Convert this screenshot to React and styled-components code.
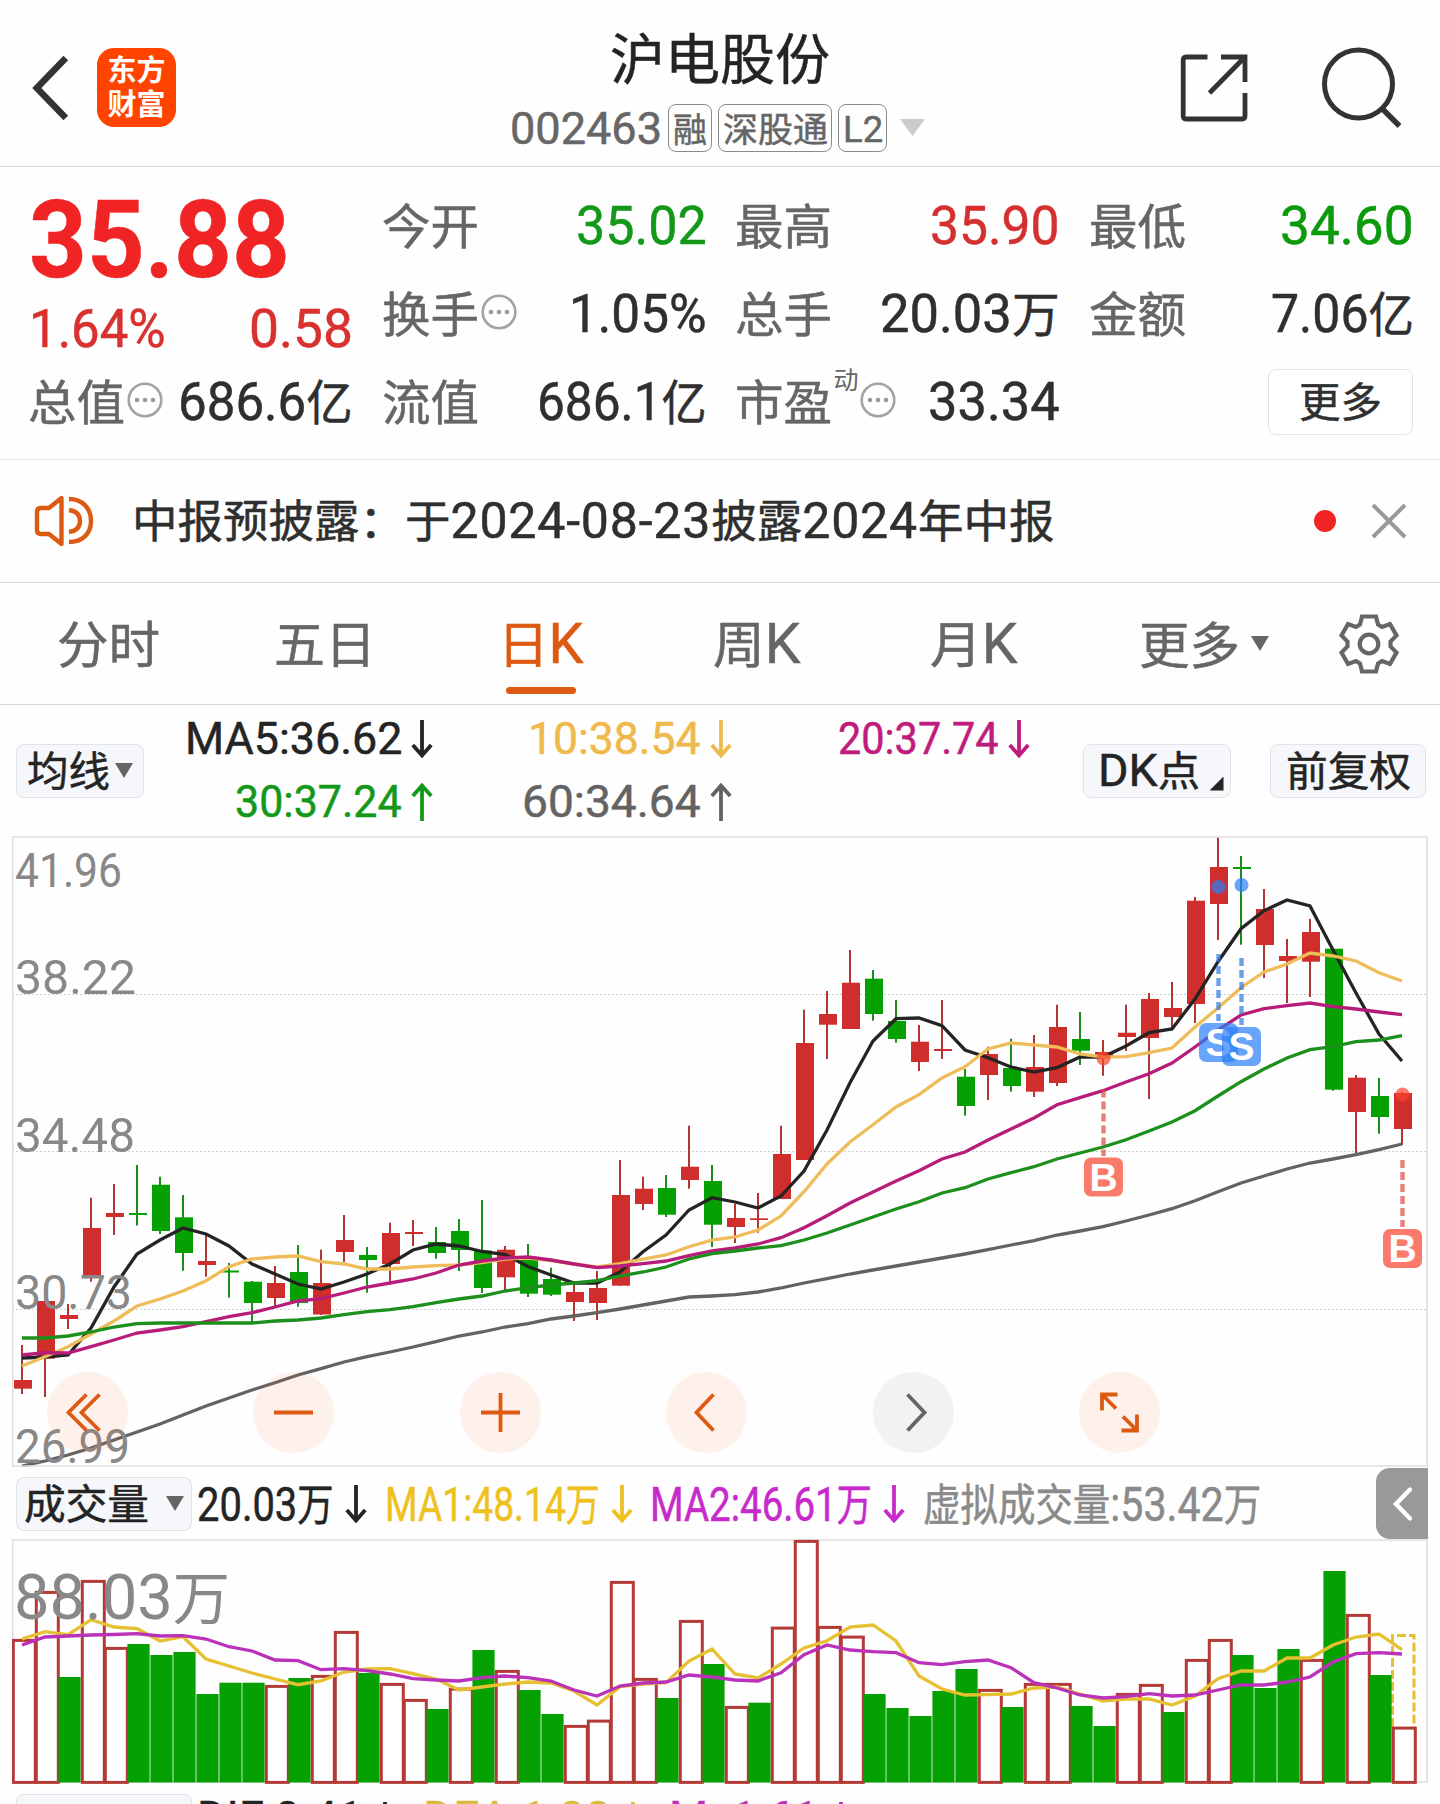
import React, { useLayoutEffect, useRef, useState } from 'react';
import styled, { createGlobalStyle } from 'styled-components';

const RED = '#cf2e2c';
const GREEN = '#05a002';
const ORANGE = '#dd5a12';

// [direction, high, low, bodyTop, bodyBottom]
const candles = [
  ['r', 1345, 1394, 1380, 1388.7], ['r', 1295, 1397, 1301, 1358.7], ['r', 1304, 1329, 1315, 1319],
  ['r', 1197.7, 1281.7, 1228, 1277], ['r', 1184, 1235, 1213, 1217], ['g', 1165, 1225.5, 1213, 1215],
  ['g', 1176.7, 1234, 1184.7, 1231], ['g', 1195, 1270.7, 1217.3, 1253], ['r', 1233, 1276.7, 1261, 1265],
  ['g', 1263, 1297.7, 1270.5, 1272.5], ['g', 1281, 1323, 1281.7, 1303], ['r', 1266, 1306, 1283, 1298],
  ['g', 1245, 1306.7, 1272, 1303], ['r', 1249.7, 1315, 1283, 1314.5], ['r', 1215, 1262, 1240, 1252],
  ['g', 1247, 1292.7, 1255, 1260], ['r', 1222.7, 1282, 1233, 1264], ['r', 1220, 1246, 1232, 1234],
  ['g', 1227, 1258.7, 1242, 1253], ['g', 1219, 1271, 1231, 1250], ['g', 1200, 1293, 1250.5, 1288],
  ['r', 1246, 1290, 1249.7, 1277.3], ['g', 1244, 1297, 1260, 1293.7], ['g', 1267.7, 1296, 1279, 1294.7],
  ['r', 1283, 1321, 1292, 1302], ['r', 1271, 1320, 1288, 1303], ['r', 1160, 1285.7, 1195, 1285.7],
  ['r', 1176.7, 1210, 1188.7, 1204], ['g', 1175, 1217, 1188, 1214.7], ['r', 1125.7, 1188.7, 1166.7, 1180],
  ['g', 1165, 1247, 1181, 1224.7], ['r', 1204, 1243, 1218, 1227], ['r', 1193, 1232.7, 1218.3, 1220],
  ['r', 1125.7, 1199, 1154, 1199], ['r', 1009.7, 1160, 1043, 1160], ['r', 991, 1059, 1014, 1024.7],
  ['r', 950, 1029, 982.7, 1029], ['g', 970, 1020.7, 978.7, 1014], ['g', 1000, 1042.7, 1021, 1039],
  ['r', 1025, 1071, 1041.7, 1062], ['r', 1000, 1059, 1049, 1051], ['g', 1069, 1115.7, 1076.7, 1106],
  ['r', 1046.7, 1100, 1054, 1075], ['g', 1038.7, 1091.7, 1068, 1086], ['r', 1035, 1097, 1067, 1091.7],
  ['r', 1004.7, 1086, 1027, 1083], ['g', 1012, 1065, 1039, 1050.7], ['r', 1040, 1075.7, 1052, 1057],
  ['r', 1004.7, 1051, 1032.7, 1037], ['r', 993, 1099, 999, 1038], ['r', 982, 1028, 1008, 1017],
  ['r', 897, 1023, 900.7, 1004], ['r', 837, 940, 867, 904], ['g', 856, 944.7, 867, 869],
  ['r', 889, 978, 909, 945], ['r', 939, 1003, 956, 961], ['r', 919, 997, 932, 961.7],
  ['g', 948, 1090.7, 948.7, 1089.7], ['r', 1075, 1153, 1077.7, 1112], ['g', 1078, 1133.7, 1096, 1117],
  ['r', 1092, 1145, 1093, 1129],
];

const priceLines = [
  {
    color: '#636363',
    points: [1466, 1461, 1455, 1448, 1440, 1432, 1424, 1415, 1406, 1398, 1390, 1382.7, 1375, 1368.7, 1362, 1356.7, 1352, 1347, 1341.7, 1336,
      1332, 1327, 1323.7, 1319, 1316, 1312.7, 1309, 1305, 1301, 1297, 1296, 1294.7, 1292, 1288, 1283, 1278.7, 1274, 1270, 1266, 1262,
      1258, 1254, 1249.7, 1245, 1240.7, 1235, 1231, 1226.7, 1221, 1215, 1208.7, 1200.7, 1191.7, 1183, 1176, 1169, 1163, 1159, 1154.7, 1149.7, 1144],
  },
  {
    color: '#242424',
    points: [1358, 1357, 1355, 1328, 1287, 1254, 1240, 1228, 1234, 1246, 1264, 1274, 1284, 1289, 1282, 1274, 1264, 1250, 1244, 1246,
      1251.5, 1254.5, 1266.5, 1275, 1283, 1283, 1272, 1251.7, 1235, 1210, 1197.7, 1202, 1208, 1196, 1171, 1130, 1082.7, 1041, 1018.7, 1018,
      1025.7, 1050, 1057.7, 1067, 1072, 1067.7, 1057, 1057, 1046, 1032.7, 1029, 999, 961.7, 928.7, 910.7, 900, 906, 950, 993, 1034, 1061],
  },
  {
    color: '#eebc58',
    points: [1366, 1356.7, 1346.7, 1334, 1321, 1306, 1299, 1291, 1280.7, 1266.7, 1259, 1257, 1256, 1261.7, 1264, 1269, 1269, 1267, 1265.7, 1265,
      1262.5, 1259, 1258, 1260.5, 1264, 1267, 1263.7, 1259, 1255, 1246.7, 1240, 1237, 1230, 1216, 1191.7, 1164, 1142, 1124.7, 1107, 1094.7,
      1078, 1066.7, 1049, 1043, 1045, 1047, 1054, 1057, 1056.7, 1052.7, 1048, 1027, 1008, 987.7, 972, 964, 953, 956, 961, 972.7, 981],
  },
  {
    color: '#b81c7a',
    points: [1355, 1352.7, 1353, 1346.7, 1340, 1333, 1330, 1326.7, 1321.7, 1316.7, 1312.7, 1307, 1301, 1298.7, 1293, 1287, 1283, 1279, 1273, 1265,
      1261, 1258, 1257, 1260, 1264, 1267.7, 1266, 1263.7, 1261, 1255.7, 1251, 1248, 1244, 1237.7, 1227.7, 1215.7, 1203, 1192, 1181, 1170.7,
      1159, 1152, 1140, 1129, 1118, 1104.7, 1097.7, 1090.7, 1082, 1073.7, 1063, 1047, 1030, 1015, 1008.7, 1005.7, 1003, 1006.7, 1009, 1012, 1014.7],
  },
  {
    color: '#1c8f1c',
    points: [1338, 1338, 1336, 1332, 1327, 1323.7, 1323, 1323, 1323, 1323, 1323, 1321, 1320, 1318, 1314.7, 1311.7, 1309.7, 1306.7, 1302.7, 1299,
      1296, 1291, 1287.7, 1285, 1283, 1280.7, 1276, 1272, 1267, 1259, 1253.7, 1251, 1248, 1245.7, 1240, 1233, 1225, 1217, 1209, 1201.7,
      1193, 1187.7, 1179, 1172.7, 1166.7, 1159, 1153, 1147, 1139.7, 1131, 1122, 1110.7, 1096, 1081.7, 1069, 1058, 1049.7, 1046.7, 1041.7, 1040, 1035.7],
  },
];

// [direction, top]
const volumes = [
  ['r', 1639], ['r', 1591], ['g', 1677], ['r', 1580], ['r', 1647], ['g', 1644], ['g', 1655], ['g', 1652], ['g', 1694], ['g', 1682.7],
  ['g', 1682.7], ['r', 1685], ['g', 1678], ['r', 1675], ['r', 1631], ['g', 1673], ['r', 1683], ['r', 1699], ['g', 1709], ['r', 1687.7],
  ['g', 1650], ['r', 1670], ['g', 1690], ['g', 1714], ['r', 1725], ['r', 1719.7], ['r', 1581], ['r', 1678], ['g', 1698], ['r', 1620],
  ['g', 1664], ['r', 1706], ['g', 1702.7], ['r', 1626.7], ['r', 1540], ['r', 1626], ['r', 1635.7], ['g', 1694], ['g', 1708], ['g', 1716],
  ['g', 1691], ['g', 1669], ['r', 1689], ['g', 1707], ['r', 1683], ['r', 1683], ['g', 1706], ['g', 1726], ['r', 1693], ['r', 1684],
  ['g', 1712], ['r', 1659], ['r', 1639], ['g', 1655], ['g', 1688], ['g', 1649], ['r', 1659], ['g', 1571], ['r', 1614], ['g', 1675],
  ['r', 1726.7],
];

const volumeLines = [
  {
    color: '#e6c030',
    points: [1639, 1631.7, 1634.7, 1619.7, 1627, 1628.7, 1641, 1636.7, 1659, 1666, 1673, 1679, 1684.7, 1681, 1672, 1669, 1668.7, 1673.7, 1679, 1690,
      1687, 1684, 1682, 1683, 1691, 1705, 1686.7, 1684, 1682.7, 1661, 1649, 1674, 1678, 1664, 1648, 1640.7, 1627, 1625, 1641, 1676,
      1689, 1695, 1694.7, 1694, 1688, 1687, 1694, 1701, 1699, 1699, 1705, 1696, 1678.7, 1671, 1671, 1658, 1658, 1645, 1637, 1634, 1649.7],
  },
  {
    color: '#b932b9',
    points: [1645, 1637, 1636, 1635, 1634.5, 1633.7, 1636, 1635.7, 1639, 1646.7, 1651, 1660, 1660.7, 1669.7, 1668.7, 1670.7, 1674, 1678.7, 1680, 1681,
      1677.7, 1676, 1677.7, 1681, 1690, 1696, 1686, 1683, 1682, 1675, 1677, 1680, 1681, 1672.7, 1654.7, 1645, 1650, 1651.7, 1652.7, 1662.7,
      1664.7, 1661.7, 1660, 1667.7, 1682.7, 1688, 1695, 1698, 1696.7, 1693.7, 1696, 1695, 1690, 1685, 1685, 1682, 1677, 1662, 1653.7, 1652.7, 1654],
  },
];

const priceLabels = [
  ['41.96', 887, 103], ['38.22', 994, 117], ['34.48', 1152, 116], ['30.73', 1309, 113], ['26.99', 1463, 111],
];

// trade marks: index of the candle, dot y, dash start/end, badge left/top
const marks = [
  { type: 'S', i: 52, dot: 887, from: 954, to: 1021, x: 1199, y: 1023 },
  { type: 'S', i: 53, dot: 885, from: 958, to: 1025, x: 1222, y: 1027 },
  { type: 'B', i: 47, dot: 1058.5, from: 1089.5, to: 1156, x: 1084, y: 1157.5 },
  { type: 'B', i: 60, dot: 1094.5, from: 1160, to: 1227, x: 1383, y: 1229 },
];

const cx = (i) => 22 + i * 23;
const toPoints = (ys) => ys.map((y, i) => `${cx(i)},${y}`).join(' ');

// Latin glyphs are set a bit larger than the Chinese ones next to them
const Mixed = ({ children }) =>
  children.split(/([\x20-\x7e]+)/).filter(Boolean).map((part, i) =>
    /[\x20-\x7e]/.test(part) ? <Latin key={i}>{part}</Latin> : part
  );

// Squeezes or stretches one line of text to a fixed width
const Fit = ({ width, children }) => {
  const ref = useRef(null);
  const [scale, setScale] = useState(1);

  useLayoutEffect(() => {
    setScale(width / ref.current.offsetWidth);
  }, [width, children]);

  return (
    <FitBox $width={width}>
      <FitText ref={ref} style={{ transform: `translateY(0.05em) scaleX(${scale})` }}>
        <Mixed>{children}</Mixed>
      </FitText>
    </FitBox>
  );
};

const DotsIcon = () => (
  <Dots viewBox="0 0 36 36">
    <circle cx="18" cy="18" r="16.3" fill="none" stroke="#a3a3a3" strokeWidth="2.6" />
    <circle cx="10" cy="18" r="2.3" fill="#999" />
    <circle cx="18" cy="18" r="2.3" fill="#999" />
    <circle cx="26" cy="18" r="2.3" fill="#999" />
  </Dots>
);

const Arrow = ({ up }) => (
  <ArrowSvg viewBox="0 0 22 38" $up={up}>
    <path d="M11 0V36M1.8 25L11 35.5L20.2 25" fill="none" stroke="currentColor" strokeWidth="3.8" />
  </ArrowSvg>
);

const Stat = ({ label, width, labelWidth = 97, sup, dots, value, color }) => (
  <StatCell>
    <StatLabel>
      <Fit width={labelWidth}>{label}</Fit>
      {sup && <Sup>{sup}</Sup>}
      {dots && <DotsIcon />}
    </StatLabel>
    <StatValue $color={color}>
      <Fit width={width}>{value}</Fit>
    </StatValue>
  </StatCell>
);

const Average = ({ text, width, color, up }) => (
  <AverageItem $color={color}>
    <Fit width={width}>{text}</Fit>
    <Arrow up={up} />
  </AverageItem>
);

const controls = [
  { name: 'first', path: 'M26 -18L8 0L26 18M13 -18L-5 0L13 18', shift: -14 },
  { name: 'zoom-out', path: 'M-19.5 0H19.5' },
  { name: 'zoom-in', path: 'M-19.5 0H19.5M0 -19.5V19.5' },
  { name: 'prev', path: 'M7 -18L-10 0L7 18' },
  { name: 'next', path: 'M-6 -18L11 0L-6 18', muted: true },
  { name: 'full', path: 'M-17.5 -2V-18H-2M-17 -17.5L-3.5 -4M17.5 2V18H2M17 17.5L3.5 4' },
];

const PriceChart = () => (
  <ChartSvg viewBox="12 836 1416 631" $height={631}>
    {[994.5, 1151.5, 1309.5].map((y) => (
      <line key={y} x1="12" x2="1427" y1={y} y2={y} stroke="#cfcfcf" strokeWidth="1" strokeDasharray="2 2" />
    ))}
    {candles.map(([dir, high, low, top, bottom], i) => {
      const color = dir === 'r' ? RED : GREEN;
      return (
        <g key={i}>
          <rect x={cx(i) - 1} y={high} width="2" height={low - high} fill={dir === 'r' ? '#b23532' : '#1b8d1b'} />
          <rect x={cx(i) - 8} y={top} width="18" height={bottom - top} fill={color} />
        </g>
      );
    })}
    {priceLines.map((line) => (
      <polyline key={line.color} points={toPoints(line.points)} fill="none" stroke={line.color} strokeWidth="3.3" />
    ))}
    {marks.map((m) => {
      const color = m.type === 'S' ? '#2a7ef8' : '#f9452f';
      return (
        <g key={m.i}>
          <g opacity="0.7" fill={color}>
            <circle cx={cx(m.i) + 0.5} cy={m.dot} r="7" />
            <line x1={cx(m.i) + 0.5} x2={cx(m.i) + 0.5} y1={m.from} y2={m.to} stroke={m.type === 'S' ? '#2e7be0' : '#d8503f'} strokeWidth="4.4" strokeDasharray="8 4" />
            <rect x={m.x} y={m.y} width="39" height="39" rx="7" />
          </g>
          <MarkText x={m.x + 19.5} y={m.y + 33}>{m.type}</MarkText>
        </g>
      );
    })}
    {priceLabels.map(([text, y, width]) => (
      <AxisText key={text} x="15" y={y} textLength={width + 4} lengthAdjust="spacingAndGlyphs">{text}</AxisText>
    ))}
    <path d="M12.7 1466V837H1427V1466Z" fill="none" stroke="#dedede" strokeWidth="1.6" />
  </ChartSvg>
);

const VolumeChart = () => (
  <ChartSvg viewBox="12 1539 1416 245" $height={245}>
    <path d="M12.7 1782V1540H1427V1782Z" fill="none" stroke="#dedede" strokeWidth="1.6" />
    <path d="M1392.5 1727V1635.5H1414V1727" fill="none" stroke="#e6c030" strokeWidth="3" strokeDasharray="9 3" />
    {volumes.map(([dir, top], i) =>
      dir === 'r' ? (
        <rect key={i} x={cx(i) - 8.7} y={top + 1.4} width="22" height={1781 - top} fill="#fff" stroke="#b43a37" strokeWidth="3" />
      ) : (
        <rect key={i} x={cx(i) - 9.6} y={top} width="22.2" height={1782.5 - top} fill={GREEN} />
      )
    )}
    {volumeLines.map((line) => (
      <polyline key={line.color} points={toPoints(line.points)} fill="none" stroke={line.color} strokeWidth="3.3" />
    ))}
    <VolumeText x="14" y="1619" textLength="216" lengthAdjust="spacingAndGlyphs">
      88.03<tspan fontSize="57">万</tspan>
    </VolumeText>
  </ChartSvg>
);

export default function App() {
  return (
    <Page>
      <GlobalStyle />
      <Header>
        <HeaderLeft>
          <svg width="40" height="66" viewBox="0 0 40 66">
            <path d="M36.8 3L7.8 33L36.8 63" fill="none" stroke="#333" strokeWidth="6.6" />
          </svg>
          <Logo>
            <span>东方</span>
            <span>财富</span>
          </Logo>
        </HeaderLeft>
        <HeaderCenter>
          <Title><Fit width={220}>沪电股份</Fit></Title>
          <CodeRow>
            <Code><Fit width={152}>002463</Fit></Code>
            <Tag $width={44}><Fit width={34}>融</Fit></Tag>
            <Tag $width={114}><Fit width={105}>深股通</Fit></Tag>
            <Tag $width={49}><Fit width={40}>L2</Fit></Tag>
            <Triangle $size={25} $height={17} $color="#cbcbcb" $left={7} />
          </CodeRow>
        </HeaderCenter>
        <HeaderRight>
          <svg width="68" height="68" viewBox="0 0 68 68">
            <path d="M27.5 3H6Q3.2 3 3.2 6V62Q3.2 65 6 65H62Q65 65 65 62V39M65 28V3H41M65 3L29.5 39" fill="none" stroke="#333" strokeWidth="4.8" />
          </svg>
          <svg width="84" height="84" viewBox="0 0 84 84">
            <circle cx="38.5" cy="38" r="34" fill="none" stroke="#333" strokeWidth="5" />
            <path d="M61.5 62L79.5 80" fill="none" stroke="#333" strokeWidth="5.4" />
          </svg>
        </HeaderRight>
      </Header>

      <Quote>
        <PriceBlock>
          <Price><Fit width={261}>35.88</Fit></Price>
          <Change>
            <Fit width={137}>1.64%</Fit>
            <Fit width={104}>0.58</Fit>
          </Change>
        </PriceBlock>
        <Stat label="今开" value="35.02" width={131} color="#14981a" />
        <Stat label="最高" value="35.90" width={130} color="#d53030" />
        <Stat label="最低" value="34.60" width={134} color="#0c9a0c" />
        <Stat label="换手" dots value="1.05%" width={138} />
        <Stat label="总手" value="20.03万" width={180} />
        <Stat label="金额" value="7.06亿" width={143} />
        <Stat label="总值" dots value="686.6亿" width={175} />
        <Stat label="流值" value="686.1亿" width={170} />
        <Stat label="市盈" sup="动" dots value="33.34" width={132} />
        <MoreCell>
          <MoreButton><Fit width={83}>更多</Fit></MoreButton>
        </MoreCell>
      </Quote>

      <Notice>
        <svg width="62" height="54" viewBox="0 0 62 54">
          <g fill="none" stroke={ORANGE} strokeWidth="4.4">
            <path d="M28.5 4V50L16 40H8Q4 40 4 36V18Q4 14 8 14H16Z" strokeLinejoin="round" />
            <path d="M36 5C49 5 58 14 58 27C58 40 49 48 36 48" />
            <path d="M36 16C43 17 47 21 47 27C47 33 43 37 36 38" />
          </g>
        </svg>
        <NoticeText><Fit width={922}>中报预披露：于2024-08-23披露2024年中报</Fit></NoticeText>
        <RedDot />
        <svg width="36" height="36" viewBox="0 0 36 36">
          <path d="M2 2L34 34M34 2L2 34" stroke="#999" strokeWidth="4" />
        </svg>
      </Notice>

      <Tabs>
        <Tab><Fit width={103}>分时</Fit></Tab>
        <Tab><Fit width={102}>五日</Fit></Tab>
        <Tab $active><Fit width={86}>日K</Fit></Tab>
        <Tab><Fit width={88}>周K</Fit></Tab>
        <Tab><Fit width={88}>月K</Fit></Tab>
        <MoreTab>
          <Fit width={101}>更多</Fit>
          <Triangle $size={18} $height={15} $color="#666" $left={11} />
        </MoreTab>
        <GearTab>
          <svg width="64" height="64" viewBox="-32 -32 64 64">
            <path
              d="M-7 -27.5H7L9 -19.5L13 -17L21 -20L27.5 -8.5L21.5 -2.5V2.5L27.5 8.5L21 20L13 17L9 19.5L7 27.5H-7L-9 19.5L-13 17L-21 20L-27.5 8.5L-21.5 2.5V-2.5L-27.5 -8.5L-21 -20L-13 -17L-9 -19.5Z"
              fill="none" stroke="#666" strokeWidth="4.2"
            />
            <circle r="9.3" fill="none" stroke="#666" strokeWidth="4.2" />
          </svg>
        </GearTab>
      </Tabs>

      <AverageBar>
        <Chip $width={128}>
          <Fit width={83}>均线</Fit>
          <Triangle $size={18} $height={15} $color="#666" $left={5} />
        </Chip>
        <Averages>
          <Average text="MA5:36.62" width={217} color="#242424" />
          <Average text="10:38.54" width={173} color="#f0b94c" />
          <Average text="20:37.74" width={161} color="#c01c7e" />
          <Average text="30:37.24" width={167} color="#14981a" up />
          <Average text="60:34.64" width={179} color="#636363" up />
        </Averages>
        <Chip $width={148} $start>
          <Fit width={102}>DK点</Fit>
          <Corner />
        </Chip>
        <Chip $width={156}><Fit width={125}>前复权</Fit></Chip>
      </AverageBar>

      <ChartArea>
        <PriceChart />
        <Controls>
          {controls.map((c) => (
            <Control key={c.name} $muted={c.muted}>
              <svg width="81" height="81" viewBox="-40.5 -40.5 81 81">
                <path d={c.path} transform={`translate(${c.shift || 0} 0)`} fill="none" stroke="currentColor" strokeWidth="3.8" />
              </svg>
            </Control>
          ))}
        </Controls>
      </ChartArea>

      <VolumeBar>
        <Chip $width={176}>
          <Fit width={125}>成交量</Fit>
          <Triangle $size={18} $height={15} $color="#666" $left={17} />
        </Chip>
        <Readout $color="#242424" $width={188}>
          <Fit width={137}>20.03万</Fit>
          <Arrow />
        </Readout>
        <Readout $color="#efc11f" $width={265}>
          <Fit width={215}>MA1:48.14万</Fit>
          <Arrow />
        </Readout>
        <Readout $color="#c72acb" $width={273}>
          <Fit width={222}>MA2:46.61万</Fit>
          <Arrow />
        </Readout>
        <Readout $color="#8a8a8a" $width={340}>
          <Fit width={338}>虚拟成交量:53.42万</Fit>
        </Readout>
        <DrawerHandle>
          <svg width="24" height="36" viewBox="0 0 24 36">
            <path d="M20 3.5L6 18L20 32.5" fill="none" stroke="#fff" strokeWidth="4.4" strokeLinecap="round" />
          </svg>
        </DrawerHandle>
      </VolumeBar>

      <ChartArea>
        <VolumeChart />
      </ChartArea>

      <MacdBar>
        <Chip $width={176}>MACD</Chip>
        <Readout $color="#242424" $width={226}>
          <Fit width={166}>DIF:0.41</Fit>
          <Arrow />
        </Readout>
        <Readout $color="#d9bb3c" $width={246}>
          <Fit width={188}>DEA:1.28</Fit>
          <Arrow />
        </Readout>
        <Readout $color="#b932b9" $width={190}>
          <Fit width={150}>M:-1.61</Fit>
          <Arrow />
        </Readout>
      </MacdBar>
    </Page>
  );
}

const GlobalStyle = createGlobalStyle`
  * {
    box-sizing: border-box;
  }

  body {
    margin: 0;
    background: #fff;
  }

  svg {
    display: block;
    flex: none;
  }
`;

const Page = styled.div`
  width: 1440px;
  height: 1804px;
  overflow: hidden;
  background: #fefefe;
  color: #2f2f2f;
  font-family: Roboto, 'Noto Sans CJK SC', sans-serif;
`;

const Latin = styled.span`
  font-size: 1.1em;
  line-height: 0;
`;

const FitBox = styled.span`
  display: inline-block;
  flex: none;
  width: ${({ $width }) => $width}px;
  text-align: left;
`;

const FitText = styled.span`
  display: inline-block;
  white-space: nowrap;
  transform-origin: left center;
  -webkit-text-stroke: 0.5px currentColor;
`;

const Triangle = styled.i`
  flex: none;
  width: ${({ $size }) => $size}px;
  height: ${({ $height }) => $height}px;
  margin-left: ${({ $left }) => $left}px;
  background: ${({ $color }) => $color};
  clip-path: polygon(0 0, 100% 0, 50% 100%);
`;

const Header = styled.header`
  display: grid;
  grid-template-columns: 400px 1fr 400px;
  height: 167px;
  border-bottom: 1.5px solid #d8d8d8;
`;

const HeaderLeft = styled.div`
  display: flex;
  align-items: center;
  gap: 28px;
  padding: 9px 0 0 29px;
`;

const Logo = styled.div`
  display: flex;
  flex-direction: column;
  align-items: center;
  justify-content: center;
  width: 79px;
  height: 79px;
  border-radius: 17px;
  background: #ff4400;
  color: #fff;
  font-size: 29px;
  font-weight: 700;
  line-height: 34px;
`;

const HeaderCenter = styled.div`
  display: flex;
  flex-direction: column;
  align-items: center;
`;

const Title = styled.div`
  margin-top: 22px;
  color: #242424;
  font-size: 55px;
  line-height: 70px;
`;

const CodeRow = styled.div`
  display: flex;
  align-items: center;
  gap: 6px;
  height: 49px;
  margin: 11px 0 0 -5px;
`;

const Code = styled.div`
  color: #666;
  font-size: 41px;
  line-height: 52px;
`;

const Tag = styled.div`
  display: flex;
  align-items: center;
  justify-content: center;
  width: ${({ $width }) => $width}px;
  height: 48px;
  border: 1.5px solid #8a8a8a;
  border-radius: 8px;
  color: #666;
  font-size: 34px;
  line-height: 42px;
`;

const HeaderRight = styled.div`
  display: flex;
  align-items: center;
  justify-content: flex-end;
  gap: 72.5px;
  padding: 9px 36px 0 0;
`;

const Quote = styled.section`
  display: grid;
  grid-template-columns: repeat(4, 323px);
  grid-template-rows: repeat(3, 88px);
  column-gap: 30.7px;
  height: 293px;
  padding: 15px 0 0 28px;
  border-bottom: 1.5px solid #ebebeb;
`;

const PriceBlock = styled.div`
  grid-row: span 2;
  padding: 6px 0 0 1px;
  margin-right: -2px;
`;

const Price = styled.div`
  color: #f02424;
  font-size: 97px;
  font-weight: 700;
  line-height: 102px;
`;

const Change = styled.div`
  display: flex;
  justify-content: space-between;
  color: #d93030;
  font-size: 48px;
  line-height: 77px;
`;

const StatCell = styled.div`
  display: flex;
  align-items: center;
  justify-content: space-between;
  margin-right: -2px;
`;

const StatLabel = styled.div`
  display: flex;
  align-items: center;
  gap: 2px;
  color: #666;
  font-size: 48px;
  line-height: 86px;
`;

const StatValue = styled.div`
  color: ${({ $color }) => $color || '#2f2f2f'};
  font-size: 48px;
  line-height: 88px;
`;

const Sup = styled.span`
  margin: -42px 0 0 -1px;
  font-size: 25px;
  line-height: 30px;
`;

const Dots = styled.svg`
  width: 36px;
  height: 36px;
  margin-top: -4px;
`;

const MoreCell = styled.div`
  display: flex;
  align-items: center;
  justify-content: flex-end;
  margin-right: -1px;
`;

const MoreButton = styled.button`
  display: flex;
  align-items: center;
  justify-content: center;
  width: 145px;
  height: 66px;
  padding: 0 0 3px;
  border: 1.5px solid #e3e3e3;
  border-radius: 8px;
  background: #fff;
  color: #2f2f2f;
  font: 41px/60px Roboto, 'Noto Sans CJK SC', sans-serif;
`;

const Notice = styled.section`
  display: flex;
  align-items: center;
  height: 123px;
  padding: 0 33px 0 33px;
  border-bottom: 1.5px solid #d8d8d8;
`;

const NoticeText = styled.div`
  flex: 1;
  margin-left: 37px;
  font-size: 45px;
  line-height: 60px;

  ${Latin} {
    letter-spacing: 0.8px;
  }
`;

const RedDot = styled.i`
  width: 22px;
  height: 22px;
  margin-right: 35px;
  border-radius: 50%;
  background: #f12424;
`;

const Tabs = styled.nav`
  display: flex;
  height: 122px;
  border-bottom: 1.5px solid #d8d8d8;
  color: #666;
  font-size: 50px;
  line-height: 120px;
`;

const Tab = styled.div`
  position: relative;
  width: 216.4px;
  color: ${({ $active }) => ($active ? ORANGE : 'inherit')};
  text-align: center;

  &::after {
    content: '';
    position: absolute;
    left: 73px;
    bottom: 10px;
    width: 70px;
    height: 7px;
    border-radius: 4px;
    background: ${({ $active }) => ($active ? ORANGE : 'transparent')};
  }
`;

const MoreTab = styled.div`
  display: flex;
  align-items: center;
  justify-content: center;
  width: 216px;
  padding-left: 28px;
`;

const GearTab = styled.div`
  display: flex;
  align-items: center;
  justify-content: center;
  width: 142px;
`;

const AverageBar = styled.section`
  display: flex;
  align-items: center;
  height: 131px;
  padding: 0 16px;
`;

const Chip = styled.div`
  display: flex;
  flex: none;
  align-items: center;
  justify-content: ${({ $start }) => ($start ? 'flex-start' : 'center')};
  width: ${({ $width }) => $width}px;
  height: 54px;
  padding-left: ${({ $start }) => ($start ? 14 : 0)}px;
  border: 1.5px solid #e1e3e6;
  border-radius: 8px;
  background: #f6f7fa;
  color: #242424;
  font-size: 41px;
  line-height: 51px;

  & + & {
    margin-left: 39.5px;
  }
`;

const Corner = styled.i`
  width: 14px;
  height: 14px;
  margin: 26px 0 0 10px;
  background: #242424;
  clip-path: polygon(100% 0, 100% 100%, 0 100%);
`;

const Averages = styled.div`
  display: grid;
  grid-template-columns: 288.5px 299px 298px;
  grid-template-rows: 63px 63px;
  width: 938.5px;
  flex: none;
`;

const AverageItem = styled.div`
  display: flex;
  align-items: center;
  justify-content: flex-end;
  gap: 9px;
  color: ${({ $color }) => $color};
  font-size: 40px;
  line-height: 66px;
`;

const ArrowSvg = styled.svg`
  width: 22px;
  height: 38px;
  transform: ${({ $up }) => ($up ? 'rotate(180deg)' : 'none')};
`;

const ChartArea = styled.section`
  position: relative;
  padding-left: 12px;
`;

const ChartSvg = styled.svg`
  width: 1416px;
  height: ${({ $height }) => $height}px;
`;

const AxisText = styled.text`
  fill: #888;
  font-size: 49px;
`;

const VolumeText = styled.text`
  fill: #888;
  font-size: 63px;
`;

const MarkText = styled.text`
  fill: #fff;
  font-family: 'Liberation Sans', sans-serif;
  font-size: 39px;
  font-weight: 700;
  text-anchor: middle;
`;

/* buttons floating over the lower edge of the price chart */
const Controls = styled.div`
  position: absolute;
  left: 47px;
  bottom: 14px;
  display: flex;
  gap: 125.4px;
`;

const Control = styled.div`
  width: 81px;
  height: 81px;
  border-radius: 50%;
  background: ${({ $muted }) => ($muted ? 'rgba(90, 90, 90, 0.07)' : 'rgba(255, 98, 20, 0.085)')};
  color: ${({ $muted }) => ($muted ? '#666' : ORANGE)};
`;

const VolumeBar = styled.section`
  display: flex;
  align-items: center;
  height: 72px;
  padding: 1px 0 0 16px;
`;

const Readout = styled.div`
  display: flex;
  flex: none;
  align-items: center;
  gap: 11px;
  width: ${({ $width }) => $width}px;
  transform: translateX(5px);
  color: ${({ $color }) => $color};
  font-size: 44px;
  line-height: 60px;
`;

const DrawerHandle = styled.div`
  display: flex;
  align-items: center;
  justify-content: center;
  width: 52px;
  height: 71px;
  margin: 0 12px 0 auto;
  border-radius: 14px 0 0 14px;
  background: #999;
`;

const MacdBar = styled.section`
  display: flex;
  align-items: center;
  height: 54px;
  margin-top: 10px;
  padding-left: 16px;

  ${FitText} {
    position: relative;
    top: -3px;
  }
`;
